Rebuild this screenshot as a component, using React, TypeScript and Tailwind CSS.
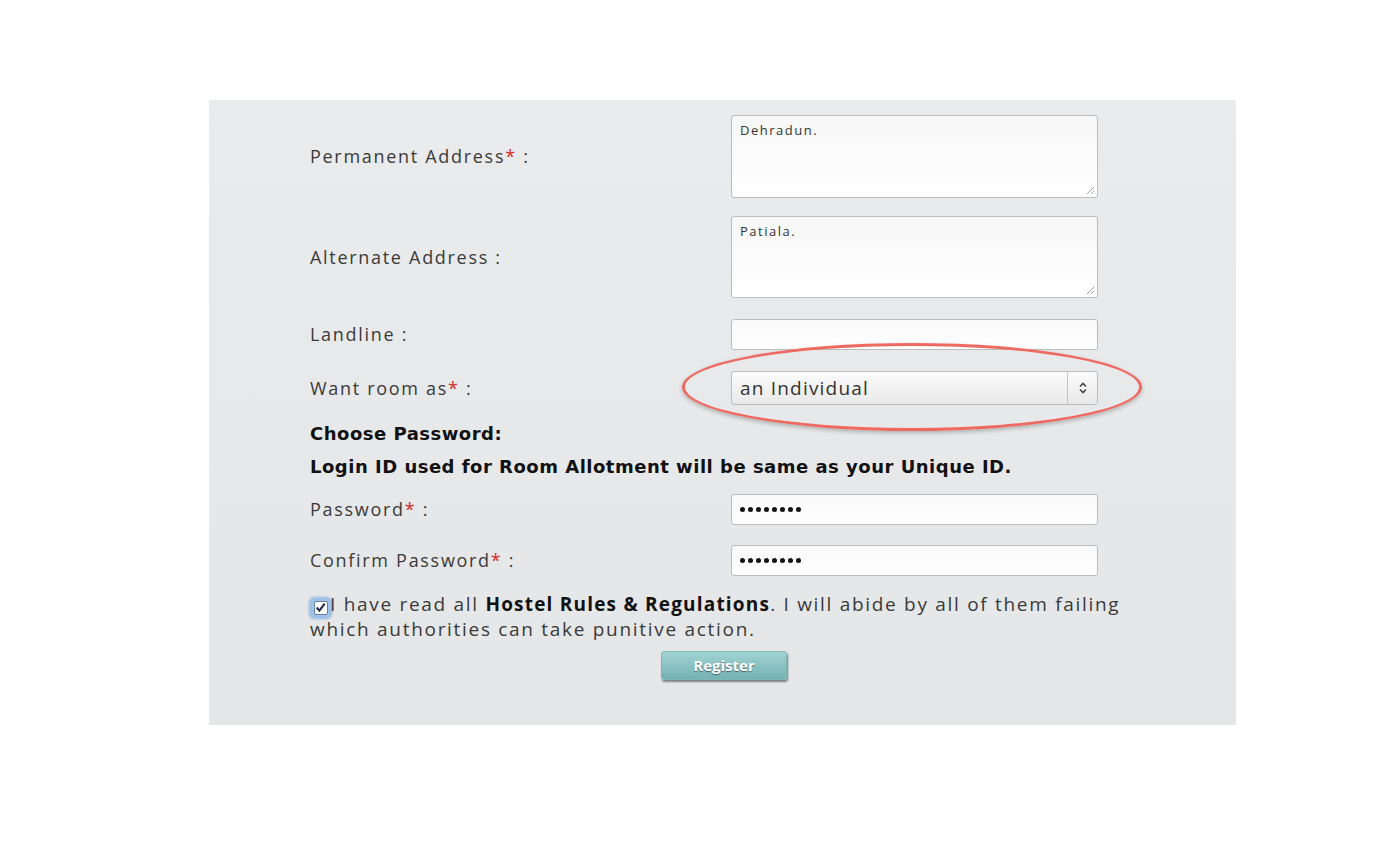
import React from "react";

const labelCls = "text-[18px] text-[#3a3a3a] tracking-[1.7px]";
const Star = () => <span className="text-[#d42b2b]">*</span>;

export default function App() {
  return (
    <div className="w-[1394px] h-[843px] bg-white pt-[100px] pl-[209px]" style={{ fontFamily: '"Open Sans", "Noto Sans", sans-serif' }}>
      <div className="w-[1027px] h-[625px] bg-gradient-to-b from-[#eaebec] to-[#e5e6e7] pl-[101px] pt-[15px] relative">
        {/* Permanent Address */}
        <div className="flex items-center h-[83px]">
          <div className={`w-[421px] ${labelCls}`}>Permanent Address<Star /> :</div>
          <div className="w-[367px] h-[83px] border border-[#bcbcbc] rounded-[3px] bg-gradient-to-b from-[#f7f7f7] to-white relative">
            <div className="text-[13px] tracking-[1.5px] text-[#333] pl-[8px] pt-[5px]">Dehradun.</div>
            <Grip />
          </div>
        </div>
        {/* Alternate */}
        <div className="flex items-center h-[82px] mt-[18px]">
          <div className={`w-[421px] ${labelCls}`}>Alternate Address :</div>
          <div className="w-[367px] h-[82px] border border-[#bcbcbc] rounded-[3px] bg-gradient-to-b from-[#f7f7f7] to-white relative">
            <div className="text-[13px] tracking-[1.5px] text-[#333] pl-[8px] pt-[5px]">Patiala.</div>
            <Grip />
          </div>
        </div>
        {/* Landline */}
        <div className="flex items-center h-[31px] mt-[21px]">
          <div className={`w-[421px] ${labelCls}`}>Landline :</div>
          <div className="w-[367px] h-[31px] border border-[#bcbcbc] rounded-[3px] bg-gradient-to-b from-[#f9f9f9] to-white" />
        </div>
        {/* Select */}
        <div className="flex items-center h-[34px] mt-[21px]">
          <div className={`w-[421px] ${labelCls}`}>Want room as<Star /> :</div>
          <div className="w-[367px] h-[34px] border border-[#bdbdbd] rounded-[3px] bg-gradient-to-b from-[#fbfbfb] to-[#e9e9e9] flex items-center">
            <div className="flex-1 pl-[8px] text-[19px] tracking-[1.2px] text-[#333]">an Individual</div>
            <div className="w-[30px] h-full border-l border-[#c4c4c4] flex items-center justify-center">
              <svg width="10" height="14" viewBox="0 0 10 14" fill="none" stroke="#444" strokeWidth="1.6">
                <path d="M2 5.5 L5 2.5 L8 5.5" />
                <path d="M2 8.5 L5 11.5 L8 8.5" />
              </svg>
            </div>
          </div>
        </div>
        {/* red ellipse */}
        <div className="absolute left-[473px] top-[243px] w-[460px] h-[88px] rounded-[50%] border-[3px] border-[#ee6a60] shadow-[0_2px_4px_rgba(0,0,0,0.25)]" />

        <div className="mt-[17px] text-[18px] font-bold text-[#111] leading-[24px] tracking-[0.5px]" style={{ fontFamily: '"DejaVu Sans", sans-serif' }}>Choose Password:</div>
        <div className="mt-[9px] text-[18px] font-bold text-[#111] leading-[24px] tracking-[0.5px]" style={{ fontFamily: '"DejaVu Sans", sans-serif' }}>Login ID used for Room Allotment will be same as your Unique ID.</div>

        <div className="flex items-center h-[31px] mt-[15px]">
          <div className={`w-[421px] ${labelCls}`}>Password<Star /> :</div>
          <PwBox />
        </div>
        <div className="flex items-center h-[31px] mt-[20px]">
          <div className={`w-[421px] ${labelCls}`}>Confirm Password<Star /> :</div>
          <PwBox />
        </div>

        <div className="mt-[16px] w-[830px] text-[19px] leading-[24px] text-[#3a3a3a] tracking-[1.7px]">
          <span className="inline-flex align-[-2px] w-[19px] h-[18px] rounded-[4px] bg-[#9dc3ea] shadow-[0_0_3px_2px_rgba(90,150,220,0.6)] items-center justify-center ml-[1px]">
            <span className="w-[14px] h-[14px] bg-white border border-[#6a7ea0] rounded-[2px] flex items-center justify-center">
              <svg width="11" height="11" viewBox="0 0 10 10" fill="none" stroke="#1e2a44" strokeWidth="1.8">
                <path d="M1.5 5 L4 7.8 L8.8 1.5" />
              </svg>
            </span>
          </span>
          I have read all <b className="text-[#111] tracking-[1.2px]">Hostel Rules &amp; Regulations</b>. I will abide by all of them failing which authorities can take punitive action.
        </div>

        <div className="mt-[10px] pl-[351px]">
          <div className="w-[126px] h-[29px] rounded-[3px] bg-gradient-to-b from-[#a2d3d3] to-[#74b2b2] border border-[#7fb5b5] shadow-[1px_2px_2px_rgba(0,0,0,0.45)] flex items-center justify-center text-white text-[15px] font-bold [text-shadow:0_1px_1px_rgba(0,0,0,0.45)]">
            Register
          </div>
        </div>
      </div>
    </div>
  );
}

function Grip() {
  return (
    <svg className="absolute right-[2px] bottom-[2px]" width="9" height="9" viewBox="0 0 9 9" stroke="#888" strokeWidth="0.8">
      <path d="M1 8 L8 1" />
      <path d="M5 8 L8 5" />
    </svg>
  );
}

function PwBox() {
  return (
    <div className="w-[367px] h-[31px] border border-[#bcbcbc] rounded-[3px] bg-gradient-to-b from-[#f9f9f9] to-white flex items-center pl-[8px] gap-[3px]">
      {Array.from({ length: 8 }).map((_, i) => (
        <span key={i} className="w-[5px] h-[5px] rounded-full bg-[#111]" />
      ))}
    </div>
  );
}
